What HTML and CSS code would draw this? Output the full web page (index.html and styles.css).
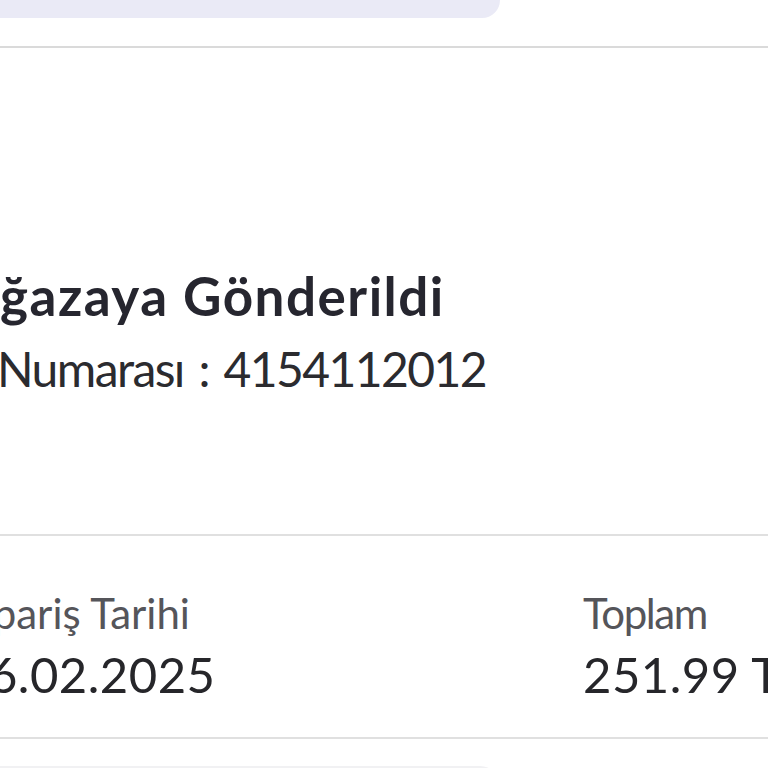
FILE: index.html
```html
<!DOCTYPE html>
<html lang="tr">
<head>
  <meta charset="UTF-8">
  <meta name="viewport" content="width=device-width, initial-scale=1.0">
  <title>Sipariş Detayı</title>
  <link rel="stylesheet" href="styles.css">
</head>
<body>
  <div class="page">
    <div class="tab-bar"></div>

    <section class="status">
      <h2 class="status-title"><span class="cut cut-title">Ma</span>ğazaya Gönderildi</h2>
      <div class="status-no">Numarası : 4154112012</div>
    </section>

    <section class="summary">
      <div class="summary-item">
        <div class="summary-label"><span class="cut cut-label">Si</span>pariş Tarihi</div>
        <div class="summary-value"><span class="cut cut-value">0</span>6.02.2025</div>
      </div>
      <div class="summary-item">
        <div class="summary-label label-total">Toplam</div>
        <div class="summary-value">251.99 TL</div>
      </div>
    </section>

    <div class="next-card"></div>
  </div>
</body>
</html>
```

FILE: styles.css
```css
* { box-sizing: border-box; }
html, body {
  margin: 0;
  background: #fff;
  overflow: hidden;
}
body {
  font-family: Lato, 'Noto Sans', sans-serif;
  color: #26262f;
}
.page {
  width: 768px;
  height: 768px;
  overflow: hidden;
}
.tab-bar {
  width: 500px;
  height: 18px;
  background: #eaeaf6;
  border-bottom-right-radius: 26px;
}
.status {
  margin-top: 28px;
  border-top: 2px solid #dadada;
  border-bottom: 2px solid #e0e0e0;
  padding: 218px 0 135px;
  white-space: nowrap;
}
.status-title {
  margin: 0;
  font-size: 53px;
  line-height: 60px;
  font-weight: 700;
  letter-spacing: 1.5px;
  color: #26262f;
}
.status-no {
  margin: 13px 0 0 -3px;
  font-size: 48px;
  line-height: 60px;
  font-weight: 400;
  letter-spacing: -1.6px;
  word-spacing: 4px;
  color: #2b2b2f;
}
.cut { display: inline-block; }
.cut-title { margin-left: -78px; width: 78px; overflow: hidden; vertical-align: bottom; }
.cut-label { margin-left: -40px; }
.cut-value { margin-left: -40px; }
.summary {
  display: grid;
  grid-template-columns: 583px 1fr;
  border-bottom: 2px solid #e0e0e0;
  padding: 52px 0 35px;
  white-space: nowrap;
}
.summary-label {
  font-size: 42px;
  line-height: 50px;
  color: #55555a;
}
.label-total { letter-spacing: -1.4px; }
.summary-value {
  margin-top: 8px;
  font-size: 49px;
  line-height: 56px;
  letter-spacing: 0.5px;
  color: #26262a;
}
.next-card {
  margin-top: 27px;
  width: 500px;
  height: 40px;
  background: #f1f1f3;
  border-top-right-radius: 20px;
}
```
